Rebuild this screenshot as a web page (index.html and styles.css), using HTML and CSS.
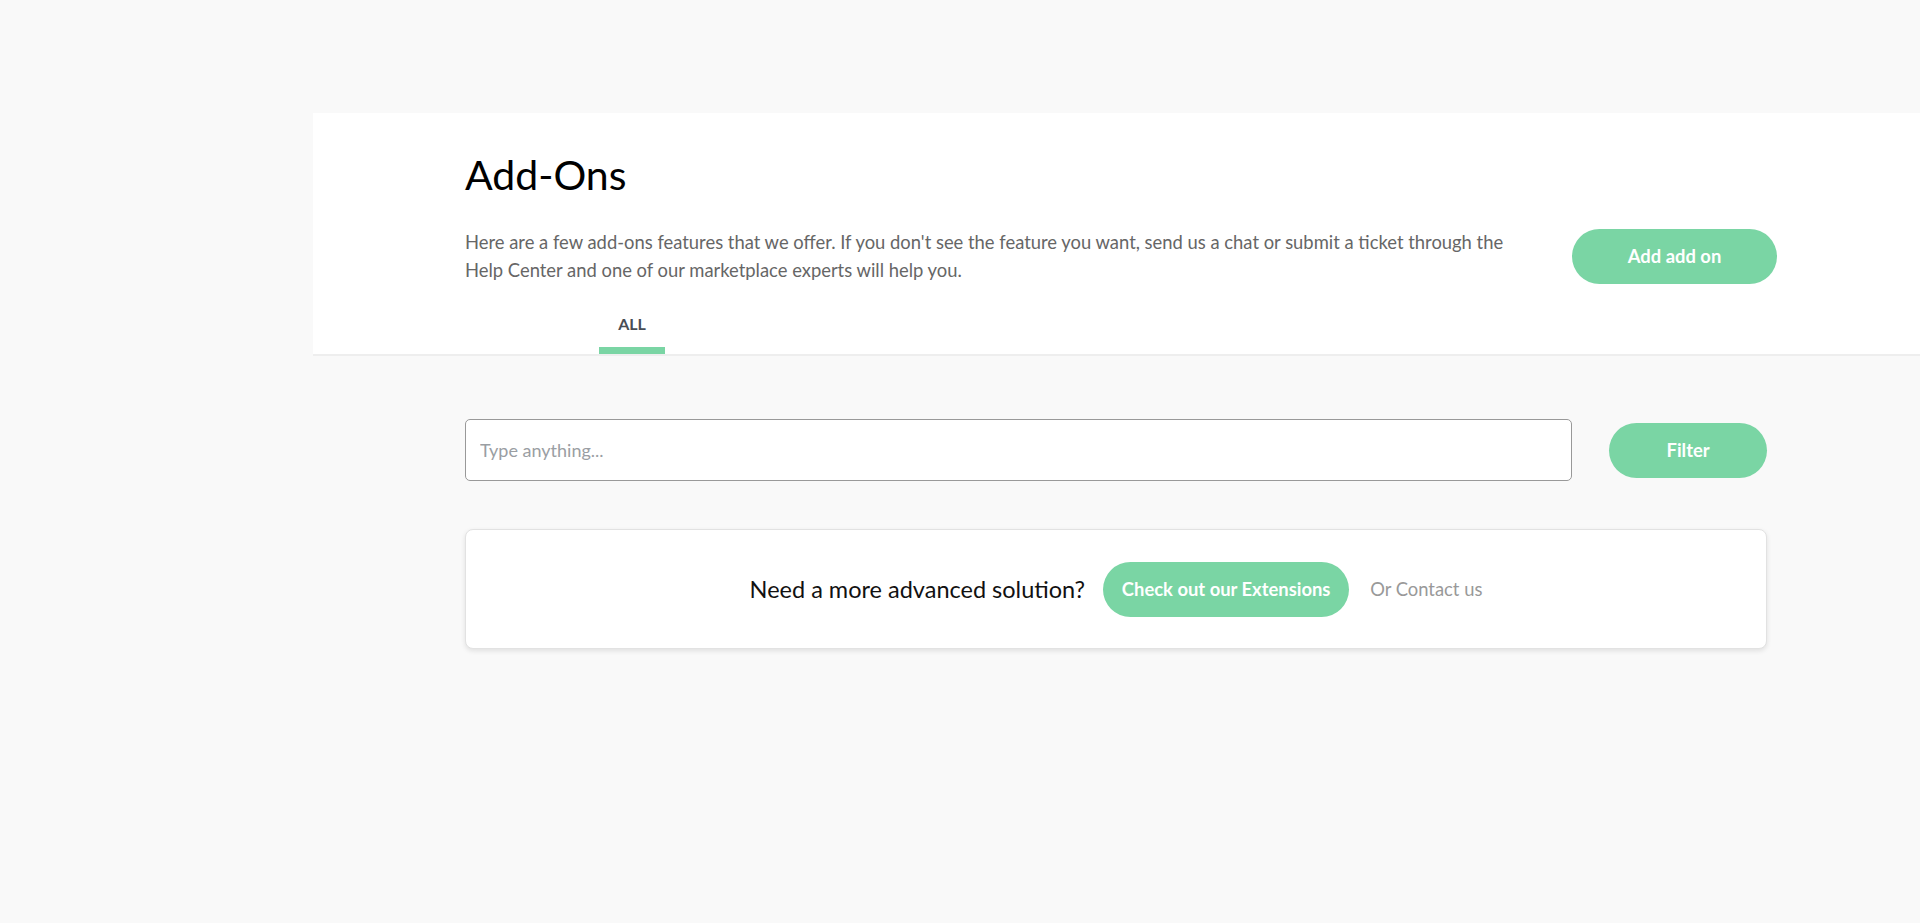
FILE: index.html
```html
<!DOCTYPE html>
<html lang="en">
<head>
<meta charset="utf-8">
<title>Add-Ons</title>
<link rel="stylesheet" href="styles.css">
</head>
<body>
<div class="page">
  <aside class="sidebar"></aside>
  <main class="main">
    <header class="header">
      <div class="container">
        <h1 class="title">Add-Ons</h1>
        <div class="intro">
          <p class="desc">Here are a few add-ons features that we offer. If you don't see the feature you want, send us a chat or submit a ticket through the Help Center and one of our marketplace experts will help you.</p>
          <button class="btn btn-add">Add add on</button>
        </div>
        <nav class="tabs">
          <a class="tab active">ALL</a>
        </nav>
      </div>
    </header>
    <section class="container body">
      <div class="search-row">
        <input class="search" type="text" placeholder="Type anything...">
        <button class="btn btn-filter">Filter</button>
      </div>
      <div class="card">
        <span class="card-text">Need a more advanced solution?</span>
        <button class="btn btn-ext">Check out our Extensions</button>
        <a class="contact">Or Contact us</a>
      </div>
    </section>
  </main>
</div>
</body>
</html>
```

FILE: styles.css
```css
* { box-sizing: border-box; }
html, body { margin: 0; padding: 0; }
body {
  background: #f9f9f9;
  font-family: Lato, "Open Sans", sans-serif;
  color: #000;
}
.page { display: flex; min-height: 923px; }
.sidebar { width: 313px; flex: none; }
.main { flex: 1; padding-top: 113px; }
.header {
  background: #fff;
  border-bottom: 2px solid #eeeeee;
}
.container {
  width: 1302px;
  margin-left: 152px;
}
.header .container { padding-top: 38px; }
.title {
  margin: 0;
  font-size: 41px;
  font-weight: 400;
  line-height: 48px;
  color: #000;
}
.intro {
  display: flex;
  align-items: center;
  justify-content: space-between;
  margin-top: 29px;
  margin-right: -10px;
}
.desc {
  margin: 0;
  width: 1060px;
  font-size: 18.4px;
  line-height: 28px;
  color: #666;
}
.btn {
  border: none;
  background: #7ad5a4;
  color: #fff;
  font-family: Lato, sans-serif;
  font-weight: 700;
  font-size: 18.4px;
  height: 55px;
  border-radius: 28px;
  cursor: pointer;
  padding: 0;
}
.btn-add { width: 205px; }
.tabs {
  display: flex;
  margin-top: 30px;
  padding-left: 134px;
}
.tab {
  display: block;
  width: 66px;
  text-align: center;
  font-size: 16px;
  line-height: 20px;
  font-weight: 700;
  color: #484d55;
  padding-bottom: 13px;
  border-bottom: 7px solid #7ad5a4;
}
.body { padding-top: 63px; }
.search-row {
  display: flex;
  align-items: center;
  gap: 37px;
}
.search {
  width: 1108px;
  height: 62px;
  border: 1px solid #999;
  border-radius: 5px;
  background: #fff;
  padding: 0 14px;
  font-family: Lato, sans-serif;
  font-size: 18px;
  color: #333;
  outline: none;
}
.search::placeholder { color: #9a9ea3; }
.btn-filter { width: 158px; }
.card {
  margin-top: 48px;
  height: 120px;
  background: #fff;
  border: 1px solid #e2e2e2;
  border-radius: 8px;
  box-shadow: 0 2px 5px rgba(0, 0, 0, 0.1);
  display: flex;
  align-items: center;
  justify-content: center;
}
.card-text {
  font-size: 23.5px;
  color: #111;
  margin-right: 18px;
}
.btn-ext { width: 246px; }
.contact {
  margin-left: 21px;
  font-size: 18.4px;
  color: #999;
}
```
